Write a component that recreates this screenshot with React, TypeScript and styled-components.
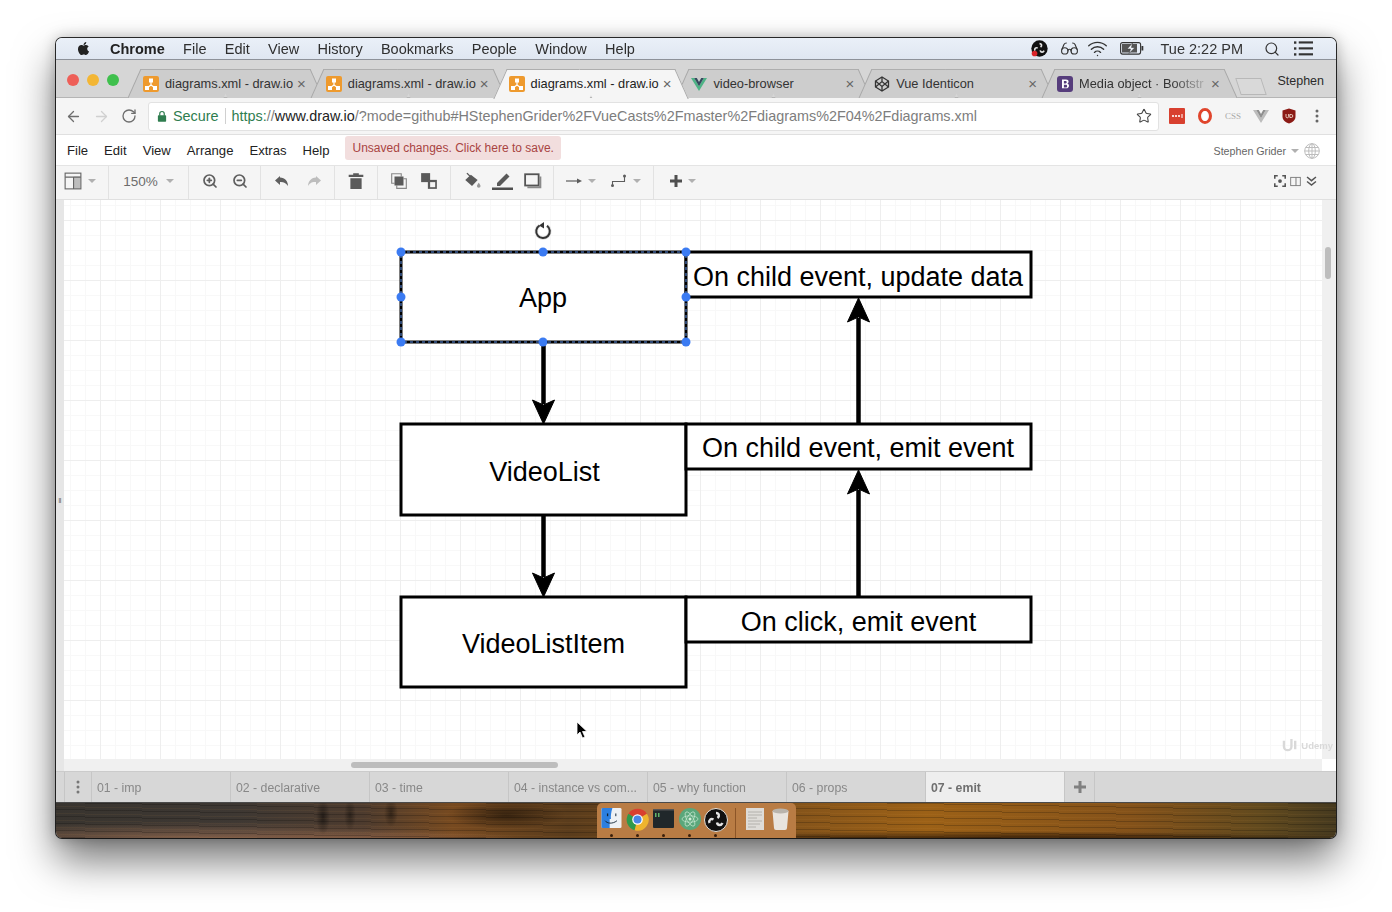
import { FC, ReactNode } from "react";
import styled, { createGlobalStyle } from "styled-components";
import { FaApple } from "react-icons/fa";
import {
  ArrowLeft,
  ArrowRight,
  Glasses,
  RotateCw,
  Search,
  Star,
  Wifi,
  ZoomIn,
  ZoomOut,
} from "lucide-react";

const GlobalStyle = createGlobalStyle`
  html, body {
    margin: 0;
    background: #ffffff;
    font-family: "Liberation Sans", Arial, sans-serif;
  }
`;

const Page = styled("div")`
  padding: 38px 56px 74px;
  height: 800px;
`;
const Window = styled("div")`
  display: flex;
  flex-direction: column;
  width: 1280px;
  height: 800px;
  border-radius: 6px;
  overflow: hidden;
  filter: blur(0.35px);
`;
const WindowShadow = styled("div")`
  border-radius: 6px;
  width: 1280px;
  box-shadow: 0 22px 42px rgba(0, 0, 0, 0.55), 0 0 0 1px #2c2c2c, 0 0 14px rgba(0, 0, 0, 0.25);
`;
const IconSvg = styled("svg")`
  flex: none;
`;

/* mac menu bar */
const MenuBar = styled("div")`
  display: flex;
  align-items: center;
  flex: none;
  box-sizing: border-box;
  height: 22px;
  padding: 0 23px 0 20px;
  background: linear-gradient(#eaf0f8, #dfe6f1);
  border-bottom: 1px solid #8d9199;
  font-size: 14.5px;
  color: #2e2e2e;
`;
const MenuItems = styled("div")`
  display: flex;
  align-items: center;
  gap: 18.3px;
  margin-left: 19px;
`;
const AppName = styled("b")`
  font-weight: 700;
  color: #222;
`;
const StatusArea = styled("div")`
  display: flex;
  align-items: center;
  margin-left: auto;
  color: #333;
`;
const StatusSlot = styled("span")<{ $left?: number; $right?: number }>`
  display: flex;
  margin: 0 ${(p) => p.$right ?? 0}px 0 ${(p) => p.$left ?? 0}px;
`;
const ClockText = styled("span")`
  margin: 0 21px 0 17px;
`;

/* chrome tabs */
const TabStrip = styled("div")`
  display: flex;
  flex: none;
  box-sizing: border-box;
  height: 38px;
  background: #d6d6d6;
  border-bottom: 1px solid #b5b5b5;
`;
const Lights = styled("div")`
  display: flex;
  flex: none;
  gap: 8px;
  box-sizing: border-box;
  width: 78px;
  padding: 14px 0 0 11px;
`;
const Light = styled("span")<{ $color: string }>`
  width: 12px;
  height: 12px;
  border-radius: 50%;
  background: ${(p) => p.$color};
`;
const Tab = styled("div")<{ $active?: boolean }>`
  position: relative;
  z-index: ${(p) => (p.$active ? 2 : 1)};
  display: flex;
  align-items: center;
  flex: none;
  box-sizing: border-box;
  width: 182.8px;
  height: 29px;
  margin-top: 9px;
  padding: 0 11px 0 9px;
  font-size: 12.8px;
  color: ${(p) => (p.$active ? "#222" : "#333")};

  &::before,
  &::after {
    content: "";
    position: absolute;
    z-index: -1;
    top: 0;
    bottom: ${(p) => (p.$active ? "-1px" : "0")};
    width: 52%;
    background: ${(p) => (p.$active ? "#f5f5f5" : "#cdcdcd")};
    border-top: 1px solid #aeaeae;
  }
  &::before {
    left: 0;
    border-left: 1px solid #a8a8a8;
    transform: skewX(-24deg);
  }
  &::after {
    right: 0;
    border-right: 1px solid #a8a8a8;
    transform: skewX(24deg);
  }
`;
const TabTitle = styled("span")<{ $fade?: boolean }>`
  flex: 1;
  min-width: 0;
  margin-left: 6px;
  white-space: nowrap;
  ${(p) =>
    p.$fade && "mask-image: linear-gradient(90deg, #000 72%, rgba(0, 0, 0, 0.25) 96%);"}
`;
const TabClose = styled("span")`
  flex: none;
  margin-left: 4px;
  font-size: 15px;
  line-height: 1;
  color: #666;
`;
const NewTab = styled("div")`
  flex: none;
  width: 24px;
  height: 15px;
  margin: 18px 0 0 7px;
  background: #d9d9d9;
  border: 1px solid #b8b8b8;
  transform: skewX(18deg);
`;
const ProfileName = styled("span")`
  margin: 14px 0 0 auto;
  padding-right: 12px;
  font-size: 12.5px;
  color: #2b2b2b;
`;

/* address bar */
const AddressRow = styled("div")`
  display: flex;
  align-items: center;
  flex: none;
  height: 37px;
  padding: 0 11px 0 9px;
  background: #f5f5f5;
  border-bottom: 1px solid #e0e0e0;
  box-sizing: border-box;
`;
const NavButtons = styled("div")`
  display: flex;
  align-items: center;
  gap: 11px;
  width: 83px;
  color: #6e6e6e;
`;
const Omnibox = styled("div")`
  display: flex;
  align-items: center;
  width: 1011px;
  height: 29px;
  padding: 0 6px 0 7px;
  box-sizing: border-box;
  background: #fff;
  border: 1px solid #e2e2e2;
  border-radius: 3px;
  font-size: 14.4px;
  white-space: nowrap;
  color: #7d7d7d;
`;
const SecureLabel = styled("span")`
  margin-left: 5px;
  padding-right: 6px;
  border-right: 1px solid #d0d0d0;
  color: #2f7d4f;
`;
const Url = styled("span")`
  margin-left: 6px;
`;
const UrlScheme = styled("span")`
  color: #2f7d4f;
`;
const UrlHost = styled("span")`
  color: #222;
`;
const StarSlot = styled("span")`
  display: flex;
  margin-left: auto;
`;
const Extensions = styled("div")`
  display: flex;
  align-items: center;
  justify-content: space-between;
  flex: 1;
  margin-left: 10px;
`;
const CssBadge = styled("span")`
  font-family: "Liberation Serif", serif;
  font-size: 9px;
  color: #a9a9a9;
`;

/* draw.io menu */
const DrawMenu = styled("div")`
  display: flex;
  align-items: center;
  flex: none;
  height: 30px;
  padding: 0 16px 0 11px;
  background: #fff;
  font-size: 13.1px;
  color: #222;
  box-sizing: border-box;
`;
const DrawItems = styled("div")`
  display: flex;
  gap: 16px;
`;
const SaveNotice = styled("div")`
  display: flex;
  align-items: center;
  height: 24px;
  margin: -4px 0 0 16px;
  padding: 0 7px;
  border-radius: 3px;
  background: #f2dede;
  color: #a94442;
  font-size: 12px;
`;
const UserArea = styled("div")`
  display: flex;
  align-items: center;
  gap: 5px;
  margin: 2px 0 0 auto;
  font-size: 10.7px;
  color: #666;
`;

/* draw.io toolbar */
const Toolbar = styled("div")`
  display: flex;
  flex: none;
  height: 35px;
  background: #f5f5f5;
  border-top: 1px solid #e4e4e4;
  border-bottom: 1px solid #e0e0e0;
  box-sizing: border-box;
  color: #5f5f5f;
`;
const ToolSection = styled("div")<{ $width: number; $gap?: number; $last?: boolean; $inset?: number }>`
  display: flex;
  align-items: center;
  justify-content: center;
  flex: none;
  gap: ${(p) => p.$gap ?? 0}px;
  width: ${(p) => p.$width}px;
  padding: 0 ${(p) => p.$inset ?? 0}px 3px 0;
  box-sizing: border-box;
  border-right: ${(p) => (p.$last ? "0" : "1px solid #e2e2e2")};
`;
const ToolGroup = styled("div")`
  display: flex;
  align-items: center;
  gap: 6px;
`;
const ZoomValue = styled("span")`
  font-size: 13.5px;
  color: #6c6c6c;
`;
const ToolbarEnd = styled("div")`
  display: flex;
  align-items: center;
  gap: 4px;
  margin-left: auto;
  padding: 0 18px 3px 0;
`;
const Caret = styled("span")`
  flex: none;
  width: 0;
  height: 0;
  border-left: 4px solid transparent;
  border-right: 4px solid transparent;
  border-top: 4px solid #b0b0b0;
`;

/* canvas */
const Workspace = styled("div")`
  position: relative;
  display: flex;
  flex: 1;
  min-height: 0;
`;
const LeftStrip = styled("div")`
  display: flex;
  align-items: center;
  justify-content: center;
  flex: none;
  width: 8px;
  padding-top: 30px;
  box-sizing: border-box;
  background: #e6e6e6;
  font-size: 8px;
  color: #666;
`;
const CanvasColumn = styled("div")`
  display: flex;
  flex-direction: column;
  flex: 1;
  min-width: 0;
`;
const Canvas = styled("div")`
  position: relative;
  flex: 1;
  overflow: hidden;
  background-color: #fff;
  background-image: linear-gradient(#eeeeee 1px, transparent 1px),
    linear-gradient(90deg, #eeeeee 1px, transparent 1px),
    linear-gradient(#f8f8f8 1px, transparent 1px),
    linear-gradient(90deg, #f8f8f8 1px, transparent 1px);
  background-size: 60px 60px, 60px 60px, 15px 15px, 15px 15px;
  background-position: 0 20px, 36px 0, 0 5px, 6px 0;
`;
const Diagram = styled("svg")`
  position: absolute;
  left: 0;
  top: 0;
  font-family: "Liberation Sans", Arial, sans-serif;
`;
const Cursor = styled("svg")`
  position: absolute;
  left: 512px;
  top: 521px;
`;
const Watermark = styled("div")`
  position: absolute;
  right: 3px;
  bottom: 18px;
  display: flex;
  align-items: center;
  gap: 2px;
  font-size: 9.500px;
  font-weight: 700;
  color: #d9d9d9;
`;
const HScroll = styled("div")`
  flex: none;
  height: 12px;
  padding: 3px 0 0 287px;
  box-sizing: border-box;
  background: #f0f0f0;
`;
const HThumb = styled("div")`
  width: 207px;
  height: 6px;
  border-radius: 3px;
  background: #bdbdbd;
`;
const VScroll = styled("div")`
  display: flex;
  flex-direction: column;
  flex: none;
  width: 14px;
  padding: 47px 0 0 3px;
  box-sizing: border-box;
  background: #f0f0f0;
`;
const VThumb = styled("div")`
  width: 6px;
  height: 32px;
  border-radius: 3px;
  background: #bdbdbd;
`;
const VCorner = styled("div")`
  width: 14px;
  height: 12px;
  margin: auto 0 0 -3px;
  background: #fff;
`;

/* sheet tabs */
const SheetBar = styled("div")`
  display: flex;
  flex: none;
  height: 31px;
  padding-left: 8px;
  background: #d7d7d7;
  border-top: 1px solid #cbcbcb;
  box-sizing: border-box;
  font-size: 12.3px;
`;
const SheetMenu = styled("div")`
  display: flex;
  align-items: center;
  justify-content: center;
  flex: none;
  width: 28px;
  border-left: 1px solid #c6c6c6;
  border-right: 1px solid #c6c6c6;
  box-sizing: border-box;
  color: #777;
`;
const SheetTab = styled("div")<{ $active?: boolean }>`
  display: flex;
  align-items: center;
  flex: none;
  width: 139px;
  padding: 2px 0 0 5px;
  box-sizing: border-box;
  border-right: 1px solid #c6c6c6;
  white-space: nowrap;
  color: ${(p) => (p.$active ? "#6f6f6f" : "#888")};
  font-weight: ${(p) => (p.$active ? 700 : 400)};
  background: ${(p) => (p.$active ? "#eeeeee" : "transparent")};
`;
const SheetAdd = styled("div")`
  display: flex;
  align-items: center;
  justify-content: center;
  flex: none;
  width: 29px;
  border-right: 1px solid #c6c6c6;
  color: #808080;
`;

/* wallpaper and dock */
const Wallpaper = styled("div")`
  display: flex;
  justify-content: center;
  flex: none;
  height: 36px;
  border-top: 1px solid #4a4a4a;
  box-sizing: border-box;
  background-image: repeating-linear-gradient(
      1deg,
      rgba(0, 0, 0, 0.2) 0 1px,
      transparent 1px 3px,
      rgba(255, 180, 90, 0.05) 3px 4px,
      transparent 4px 7px
    ),
    radial-gradient(ellipse 7px 18px at 267px 14px, rgba(0, 0, 0, 0.5), transparent),
    radial-gradient(ellipse 6px 16px at 294px 12px, rgba(0, 0, 0, 0.4), transparent),
    radial-gradient(ellipse 7px 14px at 335px 10px, rgba(0, 0, 0, 0.45), transparent),
    radial-gradient(ellipse 60px 14px at 450px 12px, rgba(0, 0, 0, 0.5), transparent),
    radial-gradient(ellipse 320px 16px at 140px 100%, rgba(165, 115, 85, 0.6), transparent),
    radial-gradient(ellipse 170px 7px at 300px 100%, rgba(150, 100, 70, 0.5), transparent),
    radial-gradient(ellipse 420px 7px at 950px 100%, rgba(25, 12, 4, 0.75), transparent),
    linear-gradient(
      90deg,
      #38342f 0,
      #3e3833 14%,
      #4d3b2e 24%,
      #774a20 31%,
      #5a3c1c 40%,
      #85541a 58%,
      #9c6117 68%,
      #84521a 84%,
      #624a1e 94%,
      #463a1f 100%
    );
`;
const Dock = styled("div")`
  display: flex;
  align-items: flex-start;
  width: 199px;
  padding: 5px 0 0 2px;
  box-sizing: border-box;
  background: #b97c44;
  border-radius: 5px 5px 0 0;
`;
const DockSlot = styled("div")<{ $running?: boolean; $width?: number }>`
  position: relative;
  display: flex;
  justify-content: center;
  flex: none;
  width: ${(p) => p.$width ?? 26}px;

  ${(p) =>
    p.$running &&
    `&::after {
      content: "";
      position: absolute;
      left: 50%;
      top: 26px;
      width: 3px;
      height: 3px;
      margin-left: -1.5px;
      border-radius: 50%;
      background: #3a1f0c;
    }`}
`;
const DockDivider = styled("div")`
  flex: none;
  width: 1px;
  height: 30px;
  margin: 0 6px;
  background: #8c5527;
`;
const UndoSvg = styled("svg")<{ $flip?: boolean }>`
  flex: none;
  transform: ${(p) => (p.$flip ? "scaleX(-1)" : "none")};
`;
const TerminalSvg = styled("svg")`
  margin-top: 1px;
`;

const Svg: FC<{ size?: number; children: ReactNode }> = ({ size = 16, children }) => (
  <IconSvg width={size} height={size} viewBox="0 0 16 16">
    {children}
  </IconSvg>
);

const DrawIoIcon = () => (
  <Svg>
    <rect width="16" height="16" rx="2" fill="#ee9a2e" />
    <path d="M8 6v3M8 9l-3.5 2.5M8 9l3.5 2.5" stroke="#fff" strokeWidth="1.2" fill="none" />
    <rect x="6" y="2.5" width="4" height="4" fill="#fff" />
    <rect x="2" y="10" width="4" height="4" fill="#fff" />
    <rect x="10" y="10" width="4" height="4" fill="#fff" />
  </Svg>
);
const VueIcon: FC<{ mono?: boolean }> = ({ mono }) => (
  <Svg>
    <path d="M0 2h3.2L8 10.2 12.8 2H16L8 15z" fill={mono ? "#bcbcbc" : "#4eb386"} />
    <path d="M3.2 2h2.6L8 6l2.2-4h2.6L8 10.2z" fill={mono ? "#8f8f8f" : "#35495e"} />
  </Svg>
);
const IdenticonIcon = () => (
  <Svg>
    <g fill="none" stroke="#333" strokeWidth="1.3">
      <path d="M8 1l6.5 4v6L8 15l-6.5-4V5z" />
      <path d="M8 1v4.5M8 10.500V15M1.500 5L8 10.500 14.500 5M1.500 11L8 5.500 14.500 11" />
    </g>
  </Svg>
);
const BootstrapIcon = () => (
  <Svg>
    <rect width="16" height="16" rx="3" fill="#563d7c" />
    <path
      d="M5 3.500h4c1.700 0 2.600.9 2.600 2.100 0 1-.6 1.700-1.400 1.900 1 .2 1.800 1 1.800 2.200 0 1.500-1.100 2.600-3 2.600H5zM6.900 5v2.400h1.600c.8 0 1.200-.5 1.200-1.200S9.300 5 8.500 5zm0 3.800v2.700h1.800c.9 0 1.400-.5 1.400-1.350s-.5-1.350-1.400-1.350z"
      fill="#fff"
      fillRule="evenodd"
    />
  </Svg>
);
const ObsMark: FC<{ size: number; dot?: boolean }> = ({ size, dot }) => (
  <IconSvg width={size} height={size} viewBox="0 0 24 24">
    <circle cx="12" cy="12" r="11.500" fill="#111" stroke="#e8e2da" strokeWidth={dot ? 0 : 1} />
    <g fill="none" stroke="#e4e4e4" strokeWidth="2.400">
      <path d="M12 5c3 0 4 3 1.500 5" />
      <path d="M5.500 15c-1-3 1.500-5 4-3.500" />
      <path d="M18.500 15c-1.500 3-5 2.500-5.500-.5" />
    </g>
    {dot && <circle cx="5" cy="19" r="4" fill="#d8232a" />}
  </IconSvg>
);
const BatteryIcon = () => (
  <IconSvg width="24" height="13" viewBox="0 0 24 13">
    <rect x="0.600" y="0.600" width="20" height="11.500" rx="2" fill="none" stroke="#333" strokeWidth="1.100" />
    <rect x="2" y="2" width="15" height="8.500" fill="#555" />
    <rect x="21.500" y="4" width="1.800" height="4.500" fill="#333" />
    <path d="M12.500 1L7 7h3.500L9 11.500 15 5.500h-3.500z" fill="#eef2f8" stroke="#333" strokeWidth="0.500" />
  </IconSvg>
);
const ListIcon = () => (
  <Svg size={19}>
    <g fill="#333">
      <rect x="0" y="2" width="2" height="2" />
      <rect x="0" y="7" width="2" height="2" />
      <rect x="0" y="12" width="2" height="2" />
      <rect x="4" y="2" width="12" height="1.800" />
      <rect x="4" y="7" width="12" height="1.800" />
      <rect x="4" y="12" width="12" height="1.800" />
    </g>
  </Svg>
);
const LockIcon = () => (
  <Svg size={12}>
    <rect x="2.500" y="7" width="11" height="8.500" rx="1" fill="#2f7d4f" />
    <path d="M5 7.500V5a3 3 0 016 0v2.500" fill="none" stroke="#2f7d4f" strokeWidth="1.600" />
  </Svg>
);
const LastPassIcon = () => (
  <Svg>
    <rect width="16" height="16" rx="1" fill="#d8402f" />
    <circle cx="4" cy="8" r="1.100" fill="#fff" />
    <circle cx="7" cy="8" r="1.100" fill="#fff" />
    <circle cx="10" cy="8" r="1.100" fill="#fff" />
    <rect x="12.500" y="6" width="1" height="4" fill="#fff" />
  </Svg>
);
const OperaIcon = () => (
  <Svg>
    <ellipse cx="8" cy="8" rx="5.500" ry="6.500" fill="none" stroke="#e0452c" strokeWidth="3" />
    <ellipse cx="8" cy="8" rx="2.600" ry="5" fill="#fff" />
  </Svg>
);
const UBlockIcon = () => (
  <Svg>
    <path d="M8 0.500l6.500 2v6c0 3.500-3 6-6.500 7-3.500-1-6.500-3.500-6.500-7v-6z" fill="#8b1a15" />
    <path d="M5 6v2.500a1.300 1.300 0 002.600 0V6M8.800 6.500h1.500a1.500 1.500 0 010 3H8.800z" fill="none" stroke="#eed8c8" strokeWidth="0.900" />
  </Svg>
);
const KebabIcon: FC<{ color: string }> = ({ color }) => (
  <Svg>
    <circle cx="8" cy="3" r="1.500" fill={color} />
    <circle cx="8" cy="8" r="1.500" fill={color} />
    <circle cx="8" cy="13" r="1.500" fill={color} />
  </Svg>
);
const GlobeIcon = () => (
  <Svg>
    <g fill="none" stroke="#bdbdbd" strokeWidth="1">
      <circle cx="8" cy="8" r="7.300" />
      <ellipse cx="8" cy="8" rx="3.300" ry="7.300" />
      <path d="M8 .7v14.600M.7 8h14.600M1.700 4.500h12.600M1.700 11.500h12.600" />
    </g>
  </Svg>
);

const LayoutIcon = () => (
  <Svg size={18}>
    <rect x="8.500" y="4" width="6" height="11" fill="#bdbdbd" />
    <g fill="none" stroke="#666" strokeWidth="1">
      <rect x="1" y="1" width="14" height="14" />
      <path d="M1 4.500h14M8.500 4.500V15" />
    </g>
  </Svg>
);
const UndoIcon: FC<{ flip?: boolean; color: string }> = ({ flip, color }) => (
  <UndoSvg $flip={flip} width="16" height="12" viewBox="0 0 16 12">
    <path d="M6 1L1 5.500 6 10V7c3.500-.2 6 .7 8 4 0-5-3-8-8-8.500z" fill={color} />
  </UndoSvg>
);
const TrashIcon = () => (
  <Svg size={18}>
    <path d="M1.500 2.500h13v2h-13zM5.500 1h5v2h-5zM3 5.500h10V15H3z" fill="#5a5a5a" />
  </Svg>
);
const ToFrontIcon = () => (
  <Svg size={18}>
    <g fill="none" stroke="#888" strokeWidth="1">
      <path d="M4 10H1.500V1.500H10V4" />
      <path d="M12 6h2.500v8.500H6V12" />
    </g>
    <rect x="4" y="4" width="8" height="8" fill="#5a5a5a" />
  </Svg>
);
const ToBackIcon = () => (
  <Svg size={18}>
    <rect x="1" y="1" width="8" height="8" fill="#5a5a5a" />
    <rect x="7" y="7" width="8" height="8" fill="#5a5a5a" />
    <rect x="9" y="9" width="4.500" height="4.500" fill="#f5f5f5" />
    <rect x="4" y="4" width="2.500" height="2.500" fill="#5a5a5a" />
  </Svg>
);
const FillIcon = () => (
  <Svg size={18}>
    <path d="M2 7l5-4.500L13 7l-5 5.500z" fill="#5a5a5a" />
    <path d="M3.500 1l4 4" stroke="#5a5a5a" strokeWidth="1.200" />
    <path d="M14 9.500c1 1.500 1.600 2.200 1.600 3a1.600 1.600 0 01-3.200 0c0-.8.600-1.500 1.600-3z" fill="#999" />
  </Svg>
);
const PencilIcon = () => (
  <IconSvg width="21" height="18" viewBox="0 0 21 18">
    <path d="M5 11L14.500 1.500l3 3L8 14H5z" fill="#5a5a5a" />
    <rect x="0" y="15.500" width="21" height="2.500" fill="#4f4f4f" />
  </IconSvg>
);
const ShadowIcon = () => (
  <Svg size={18}>
    <rect x="1" y="2" width="12" height="10" fill="none" stroke="#555" strokeWidth="1.600" />
    <path d="M3 13.500h11.500V4" fill="none" stroke="#8a8a8a" strokeWidth="1.800" />
  </Svg>
);
const ArrowLine = () => (
  <IconSvg width="16" height="10" viewBox="0 0 16 10">
    <path d="M0 5h12" stroke="#5c5c5c" strokeWidth="1.200" />
    <path d="M11 2.500L16 5l-5 2.500z" fill="#5c5c5c" />
  </IconSvg>
);
const WaypointLine = () => (
  <IconSvg width="16" height="14" viewBox="0 0 16 14">
    <path d="M1.500 12V7.500h12V2" fill="none" stroke="#5c5c5c" strokeWidth="1.100" />
    <circle cx="1.500" cy="11.500" r="1.500" fill="#5c5c5c" />
    <circle cx="13.500" cy="2" r="1.500" fill="#5c5c5c" />
  </IconSvg>
);
const PlusIcon: FC<{ color: string; size?: number }> = ({ color, size = 14 }) => (
  <IconSvg width={size} height={size} viewBox="0 0 14 14">
    <path d="M5.500 1h3v4.500H13v3H8.500V13h-3V8.500H1v-3h4.500z" fill={color} />
  </IconSvg>
);
const FitIcon = () => (
  <Svg size={12}>
    <path d="M1 5V1h4M11 1h4v4M15 11v4h-4M5 15H1v-4" fill="none" stroke="#555" strokeWidth="2.200" />
    <circle cx="8" cy="8" r="2.500" fill="#555" />
  </Svg>
);
const PanelIcon = () => (
  <Svg size={11}>
    <rect x="1" y="2" width="14" height="12" fill="none" stroke="#777" strokeWidth="1.300" />
    <rect x="8" y="2" width="1.400" height="12" fill="#777" />
  </Svg>
);
const ChevronsIcon = () => (
  <Svg size={13}>
    <path d="M2.500 2.500L8 7l5.500-4.500M2.500 8L8 12.500 13.500 8" fill="none" stroke="#555" strokeWidth="1.800" />
  </Svg>
);
const RotateHandle = () => (
  <g>
    <path d="M539.500 225.500a6.800 6.800 0 107.500 .3" fill="none" stroke="#e0e0e0" strokeWidth="3.600" />
    <path d="M539.500 225.500a6.800 6.800 0 107.500 .3" fill="none" stroke="#333" strokeWidth="2" />
    <path d="M544 222l-5 3.500 5 3z" fill="#333" />
  </g>
);

const FinderIcon = () => (
  <IconSvg width="21" height="20" viewBox="0 0 22 22">
    <rect width="22" height="22" rx="1.500" fill="#eef1f4" />
    <path d="M0 1.500A1.500 1.500 0 011.500 0H12c-1.500 5-2 9-1.600 12H9v10H1.500A1.500 1.500 0 010 20.500z" fill="#2c7fe0" />
    <path d="M4 14c2 3 8 4 13 0" stroke="#123" strokeWidth="1" fill="none" />
    <rect x="6" y="6" width="1.400" height="3" fill="#123" />
    <rect x="15" y="6" width="1.400" height="3" fill="#456" />
  </IconSvg>
);
const ChromeIcon = () => (
  <IconSvg width="23" height="23" viewBox="0 0 24 24">
    <path d="M12 12L2.500 6A11.500 11.500 0 0121.800 6z" fill="#d9402f" />
    <path d="M12 12L2.500 6A11.500 11.500 0 009 23.300z" fill="#2f9a4b" />
    <path d="M12 12h0L21.800 6A11.500 11.500 0 019 23.300z" fill="#eeb42e" />
    <circle cx="12" cy="12" r="5.500" fill="#fff" />
    <circle cx="12" cy="12" r="4.200" fill="#4a86e6" />
  </IconSvg>
);
const TerminalIcon = () => (
  <TerminalSvg width="21" height="19" viewBox="0 0 21 19">
    <rect width="21" height="19" rx="1" fill="#20272a" />
    <rect y="0" width="21" height="1.500" fill="#555" />
    <rect x="2" y="4" width="1.500" height="4" fill="#5fb56a" />
    <rect x="5" y="4" width="1.500" height="4" fill="#5fb56a" />
  </TerminalSvg>
);
const AtomIcon = () => (
  <IconSvg width="22" height="22" viewBox="0 0 22 22">
    <circle cx="11" cy="11" r="11" fill="#5aa77b" />
    <g fill="none" stroke="#c9e8d2" strokeWidth="0.700">
      <ellipse cx="11" cy="11" rx="8" ry="3.200" transform="rotate(60 11 11)" />
      <ellipse cx="11" cy="11" rx="8" ry="3.200" transform="rotate(-60 11 11)" />
      <ellipse cx="11" cy="11" rx="8" ry="3.200" />
    </g>
    <circle cx="11" cy="11" r="1.500" fill="#d7efdd" />
  </IconSvg>
);
const NotesIcon = () => (
  <IconSvg width="18" height="22" viewBox="0 0 18 22">
    <rect width="18" height="22" fill="#dedcd8" />
    <path d="M2 4h14M2 7h14M2 10h9M2 13h14M2 16h12M2 19h8" stroke="#a8a6a2" strokeWidth="0.800" />
  </IconSvg>
);
const TrashCanIcon = () => (
  <IconSvg width="17" height="22" viewBox="0 0 17 22">
    <path d="M0.500 3h16l-1.500 17a2 2 0 01-2 2H4a2 2 0 01-2-2z" fill="#e8e4de" />
    <ellipse cx="8.500" cy="3" rx="8" ry="2.500" fill="#b9b4ac" />
  </IconSvg>
);

const TABS: { title: string; icon: ReactNode; active?: boolean; fade?: boolean }[] = [
  { title: "diagrams.xml - draw.io", icon: <DrawIoIcon /> },
  { title: "diagrams.xml - draw.io", icon: <DrawIoIcon /> },
  { title: "diagrams.xml - draw.io", icon: <DrawIoIcon />, active: true },
  { title: "video-browser", icon: <VueIcon /> },
  { title: "Vue Identicon", icon: <IdenticonIcon /> },
  { title: "Media object · Bootstr", icon: <BootstrapIcon />, fade: true },
];
const MAC_MENU = ["File", "Edit", "View", "History", "Bookmarks", "People", "Window", "Help"];
const DRAW_MENU = ["File", "Edit", "View", "Arrange", "Extras", "Help"];
const SHEETS = [
  "01 - imp",
  "02 - declarative",
  "03 - time",
  "04 - instance vs com...",
  "05 - why function",
  "06 - props",
  "07 - emit",
];

const Handle: FC<{ x: number; y: number }> = ({ x, y }) => <circle cx={x} cy={y} r="4.500" fill="#3b7bf2" />;

const Box: FC<{ x: number; y: number; w: number; h: number; label: string; dx?: number; dy?: number }> = ({
  x,
  y,
  w,
  h,
  label,
  dx = 0,
  dy = 10,
}) => (
  <g>
    <rect x={x} y={y} width={w} height={h} fill="#fff" stroke="#000" strokeWidth="3" />
    <text x={x + w / 2 + dx} y={y + h / 2 + dy} textAnchor="middle" fontSize="27" fill="#000">
      {label}
    </text>
  </g>
);
const Arrow: FC<{ x: number; from: number; to: number }> = ({ x, from, to }) => {
  const dir = to > from ? 1 : -1;
  return (
    <g>
      <path d={`M${x} ${from}V${to - dir * 20}`} stroke="#000" strokeWidth="4.500" />
      <path
        d={`M${x} ${to}L${x - 11} ${to - dir * 24}L${x} ${to - dir * 19}L${x + 11} ${to - dir * 24}z`}
        fill="#000"
        stroke="#000"
        strokeWidth="1"
      />
    </g>
  );
};

export default function App() {
  return (
    <Page>
      <GlobalStyle />
      <WindowShadow>
        <Window>
          <MenuBar>
            <FaApple size={15} color="#222" />
            <MenuItems>
              <AppName>Chrome</AppName>
              {MAC_MENU.map((item) => (
                <span key={item}>{item}</span>
              ))}
            </MenuItems>
            <StatusArea>
              <ObsMark size={17} dot />
              <StatusSlot $left={12} $right={8}>
                <Glasses size={19} strokeWidth={1.4} />
              </StatusSlot>
              <Wifi size={21} strokeWidth={1.6} />
              <StatusSlot $left={12}>
                <BatteryIcon />
              </StatusSlot>
              <ClockText>Tue 2:22 PM</ClockText>
              <Search size={16} strokeWidth={1.8} />
              <StatusSlot $left={14}>
                <ListIcon />
              </StatusSlot>
            </StatusArea>
          </MenuBar>

          <TabStrip>
            <Lights>
              <Light $color="#ee5f58" />
              <Light $color="#f3b634" />
              <Light $color="#3fc04d" />
            </Lights>
            {TABS.map((tab, i) => (
              <Tab key={i} $active={tab.active}>
                {tab.icon}
                <TabTitle $fade={tab.fade}>{tab.title}</TabTitle>
                <TabClose>×</TabClose>
              </Tab>
            ))}
            <NewTab />
            <ProfileName>Stephen</ProfileName>
          </TabStrip>

          <AddressRow>
            <NavButtons>
              <ArrowLeft size={17} strokeWidth={1.8} />
              <ArrowRight size={17} strokeWidth={1.8} color="#d0d0d0" />
              <RotateCw size={16} strokeWidth={2} />
            </NavButtons>
            <Omnibox>
              <LockIcon />
              <SecureLabel>Secure</SecureLabel>
              <Url>
                <UrlScheme>https:</UrlScheme>//<UrlHost>www.draw.io</UrlHost>
                /?mode=github#HStephenGrider%2FVueCasts%2Fmaster%2Fdiagrams%2F04%2Fdiagrams.xml
              </Url>
              <StarSlot>
                <Star size={16} strokeWidth={1.6} color="#444" />
              </StarSlot>
            </Omnibox>
            <Extensions>
              <LastPassIcon />
              <OperaIcon />
              <CssBadge>CSS</CssBadge>
              <VueIcon mono />
              <UBlockIcon />
              <KebabIcon color="#666" />
            </Extensions>
          </AddressRow>

          <DrawMenu>
            <DrawItems>
              {DRAW_MENU.map((item) => (
                <span key={item}>{item}</span>
              ))}
            </DrawItems>
            <SaveNotice>Unsaved changes. Click here to save.</SaveNotice>
            <UserArea>
              Stephen Grider
              <Caret />
              <GlobeIcon />
            </UserArea>
          </DrawMenu>

          <Toolbar>
            <ToolSection $width={53} $gap={6} $inset={4}>
              <LayoutIcon />
              <Caret />
            </ToolSection>
            <ToolSection $width={80} $gap={8}>
              <ZoomValue>150%</ZoomValue>
              <Caret />
            </ToolSection>
            <ToolSection $width={72} $gap={14}>
              <ZoomIn size={16} strokeWidth={2.6} />
              <ZoomOut size={16} strokeWidth={2.6} />
            </ToolSection>
            <ToolSection $width={74} $gap={16}>
              <UndoIcon color="#5f5f5f" />
              <UndoIcon flip color="#bdbdbd" />
            </ToolSection>
            <ToolSection $width={43}>
              <TrashIcon />
            </ToolSection>
            <ToolSection $width={73} $gap={12}>
              <ToFrontIcon />
              <ToBackIcon />
            </ToolSection>
            <ToolSection $width={103} $gap={11}>
              <FillIcon />
              <PencilIcon />
              <ShadowIcon />
            </ToolSection>
            <ToolSection $width={100} $gap={15}>
              <ToolGroup>
                <ArrowLine />
                <Caret />
              </ToolGroup>
              <ToolGroup>
                <WaypointLine />
                <Caret />
              </ToolGroup>
            </ToolSection>
            <ToolSection $width={56} $gap={5} $last>
              <PlusIcon color="#4f4f4f" />
              <Caret />
            </ToolSection>
            <ToolbarEnd>
              <FitIcon />
              <PanelIcon />
              <ChevronsIcon />
            </ToolbarEnd>
          </Toolbar>

          <Workspace>
            <LeftStrip>ǁ</LeftStrip>
            <CanvasColumn>
              <Canvas>
                <Diagram width="1258" height="560">
                  <g transform="translate(-64 -200)">
                    <Box x={401} y={252} w={285} h={90} label="App" dx={-0.500} />
                    <Box x={401} y={424} w={285} h={91} label="VideoList" dx={1} dy={11} />
                    <Box x={401} y={597} w={285} h={90} label="VideoListItem" dy={11} />
                    <Box x={686} y={252} w={345} h={45} label="On child event, update data" dx={-0.500} dy={11} />
                    <Box x={686} y={424} w={345} h={45} label="On child event, emit event" dx={-0.500} dy={10.500} />
                    <Box x={686} y={597} w={345} h={45} label="On click, emit event" dy={11} />
                    <Arrow x={543.500} from={344} to={424} />
                    <Arrow x={543.500} from={516} to={597} />
                    <Arrow x={858.500} from={424} to={298} />
                    <Arrow x={858.500} from={597} to={470} />
                    <rect
                      x={401}
                      y={252}
                      width={285}
                      height={90}
                      fill="none"
                      stroke="#5b8fe8"
                      strokeWidth="1"
                      strokeDasharray="3 3"
                    />
                    <Handle x={401} y={252} />
                    <Handle x={543} y={252} />
                    <Handle x={686} y={252} />
                    <Handle x={401} y={297} />
                    <Handle x={686} y={297} />
                    <Handle x={401} y={342} />
                    <Handle x={543} y={342} />
                    <Handle x={686} y={342} />
                    <RotateHandle />
                  </g>
                </Diagram>
                <Cursor width="12" height="18" viewBox="0 0 12 18">
                  <path d="M1 1v13l3-3 2.500 6 2.500-1-2.500-5.500H11z" fill="#000" stroke="#fff" strokeWidth="0.800" />
                </Cursor>
              </Canvas>
              <HScroll>
                <HThumb />
              </HScroll>
            </CanvasColumn>
            <VScroll>
              <VThumb />
              <VCorner />
            </VScroll>
            <Watermark>
              <svg width="17" height="15" viewBox="0 0 18 16">
                <path d="M2 3v6a4 4 0 008 0V1M14 3v9" fill="none" stroke="#d9d9d9" strokeWidth="2.500" />
              </svg>
              Udemy
            </Watermark>
          </Workspace>

          <SheetBar>
            <SheetMenu>
              <KebabIcon color="#777" />
            </SheetMenu>
            {SHEETS.map((sheet) => (
              <SheetTab key={sheet} $active={sheet === "07 - emit"}>
                {sheet}
              </SheetTab>
            ))}
            <SheetAdd>
              <PlusIcon color="#808080" />
            </SheetAdd>
          </SheetBar>

          <Wallpaper>
            <Dock>
              <DockSlot $running>
                <FinderIcon />
              </DockSlot>
              <DockSlot $running>
                <ChromeIcon />
              </DockSlot>
              <DockSlot $running>
                <TerminalIcon />
              </DockSlot>
              <DockSlot $running>
                <AtomIcon />
              </DockSlot>
              <DockSlot $running>
                <ObsMark size={24} />
              </DockSlot>
              <DockDivider />
              <DockSlot>
                <NotesIcon />
              </DockSlot>
              <DockSlot>
                <TrashCanIcon />
              </DockSlot>
            </Dock>
          </Wallpaper>
        </Window>
      </WindowShadow>
    </Page>
  );
}
